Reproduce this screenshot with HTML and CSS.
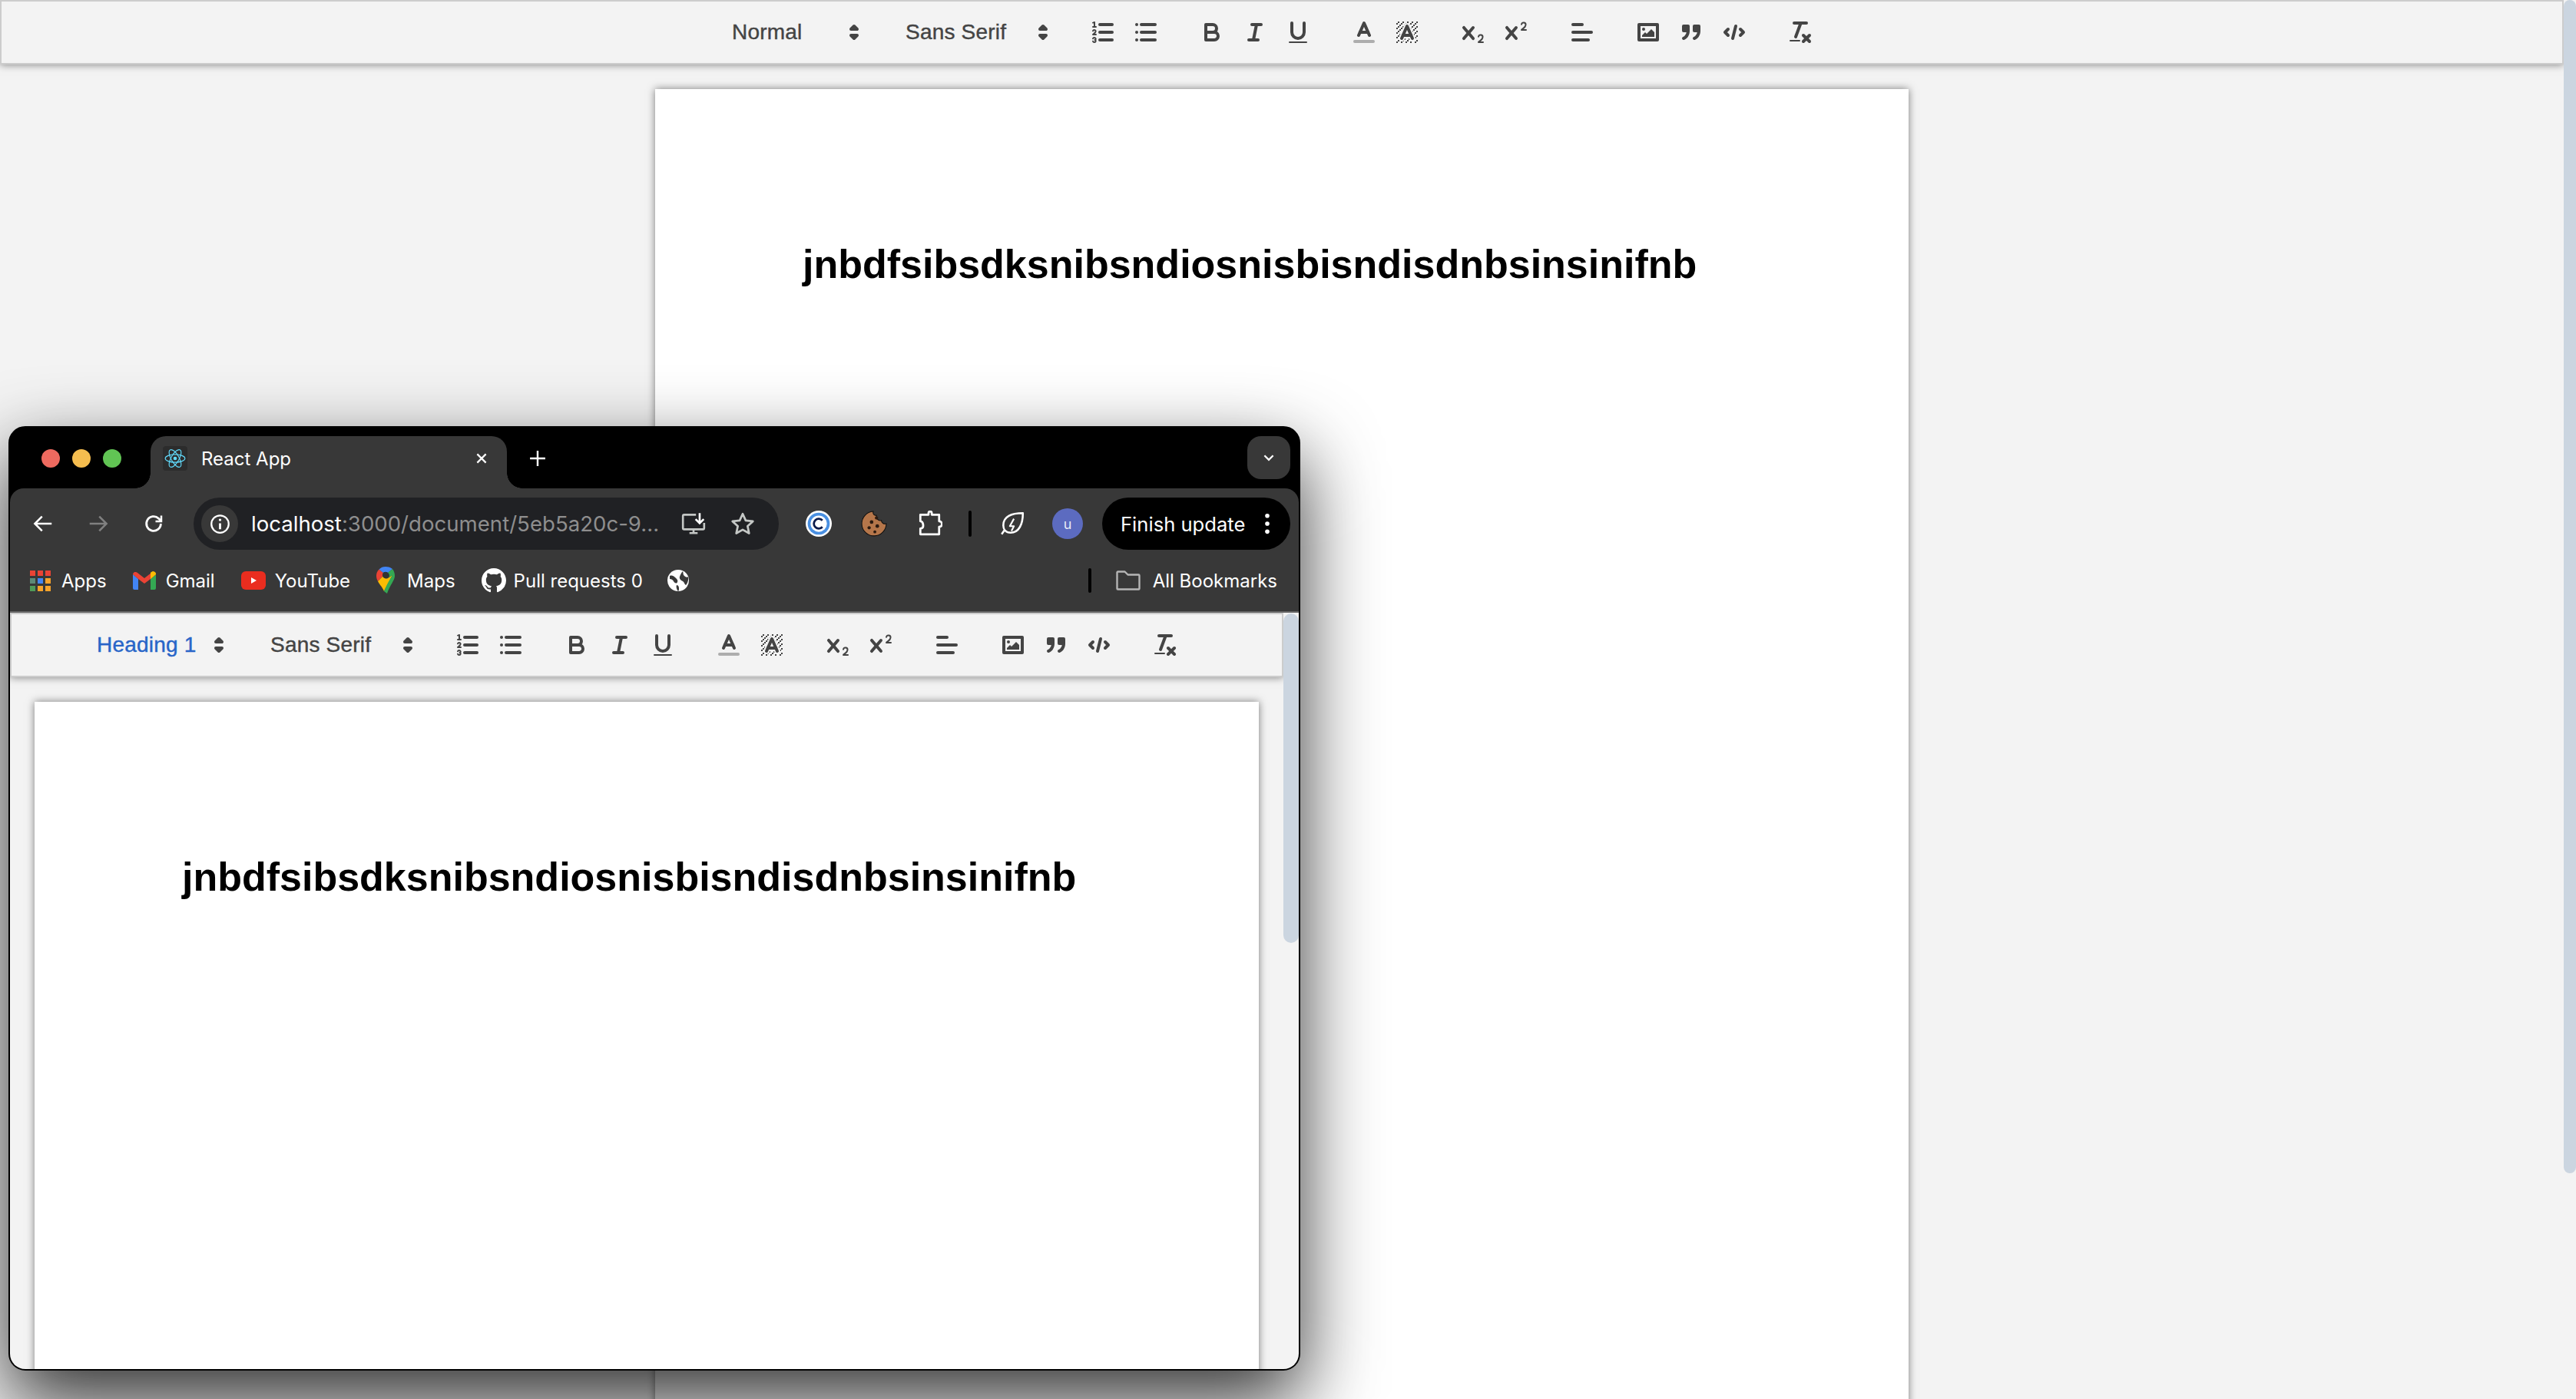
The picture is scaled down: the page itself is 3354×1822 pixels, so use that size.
FILE: index.html
```html
<!DOCTYPE html>
<html lang="en">
<head>
<meta charset="utf-8">
<title>React App</title>
<link rel="stylesheet" href="styles.css">
</head>
<body>
<svg class="defs" aria-hidden="true">
  <symbol id="q-arrow" viewBox="0 0 18 18"><polygon class="s" points="7 11 9 13 11 11 7 11"/><polygon class="s" points="7 7 9 5 11 7 7 7"/></symbol>
  <symbol id="q-ol" viewBox="0 0 18 18"><line class="s" x1="7" x2="15" y1="4" y2="4"/><line class="s" x1="7" x2="15" y1="9" y2="9"/><line class="s" x1="7" x2="15" y1="14" y2="14"/><line class="s thin" x1="2.5" x2="4.5" y1="5.5" y2="5.5"/><path class="f" d="M3.5,6A0.5,0.5,0,0,1,3,5.5V3.085l-0.276.138A0.5,0.5,0,0,1,2.053,3c-0.124-.247-0.023-0.324.224-0.447l1-.5A0.5,0.5,0,0,1,4,2.5v3A0.5,0.5,0,0,1,3.5,6Z"/><path class="s thin" d="M4.5,10.5h-2c0-.234,1.85-1.076,1.85-2.234A0.959,0.959,0,0,0,2.5,8.156"/><path class="s thin" d="M2.5,14.846a0.959,0.959,0,0,0,1.85-.109A0.7,0.7,0,0,0,3.75,14a0.688,0.688,0,0,0,.6-0.736,0.959,0.959,0,0,0-1.85-.109"/></symbol>
  <symbol id="q-ul" viewBox="0 0 18 18"><line class="s" x1="6" x2="15" y1="4" y2="4"/><line class="s" x1="6" x2="15" y1="9" y2="9"/><line class="s" x1="6" x2="15" y1="14" y2="14"/><line class="s" x1="3" x2="3" y1="4" y2="4"/><line class="s" x1="3" x2="3" y1="9" y2="9"/><line class="s" x1="3" x2="3" y1="14" y2="14"/></symbol>
  <symbol id="q-b" viewBox="0 0 18 18"><path class="s" d="M5,4H9.5A2.5,2.5,0,0,1,12,6.5v0A2.5,2.5,0,0,1,9.5,9H5A0,0,0,0,1,5,9V4A0,0,0,0,1,5,4Z"/><path class="s" d="M5,9h5.5A2.5,2.5,0,0,1,13,11.5v0A2.5,2.5,0,0,1,10.5,14H5a0,0,0,0,1,0,0V9A0,0,0,0,1,5,9Z"/></symbol>
  <symbol id="q-i" viewBox="0 0 18 18"><line class="s" x1="7" x2="13" y1="4" y2="4"/><line class="s" x1="5" x2="11" y1="14" y2="14"/><line class="s" x1="8" x2="10" y1="14" y2="4"/></symbol>
  <symbol id="q-u" viewBox="0 0 18 18"><path class="s" d="M5,3V9a4.012,4.012,0,0,0,4,4H9a4.012,4.012,0,0,0,4-4V3"/><rect class="f" height="1" rx="0.5" ry="0.5" width="12" x="3" y="15"/></symbol>
  <symbol id="q-color" viewBox="0 0 18 18"><line class="s faint" x1="3" x2="15" y1="15" y2="15"/><polyline class="s" points="5.5 11 9 3 12.5 11"/><line class="s" x1="11.63" x2="6.38" y1="9" y2="9"/></symbol>
  <symbol id="q-bg" viewBox="0 0 18 18"><g class="f"><polygon points="6 6.868 6 6 5 6 5 7 5.942 7 6 6.868"/><rect height="1" width="1" x="4" y="4"/><polygon points="6.817 5 6 5 6 6 6.38 6 6.817 5"/><rect height="1" width="1" x="2" y="6"/><rect height="1" width="1" x="3" y="5"/><rect height="1" width="1" x="4" y="7"/><polygon points="4 11.439 4 11 3 11 3 12 3.755 12 4 11.439"/><rect height="1" width="1" x="2" y="12"/><rect height="1" width="1" x="2" y="9"/><rect height="1" width="1" x="2" y="15"/><polygon points="4.63 10 4 10 4 11 4.192 11 4.63 10"/><rect height="1" width="1" x="3" y="8"/><path d="M10.832,4.2L11,4.582V4H10.708A1.948,1.948,0,0,1,10.832,4.2Z"/><path d="M7,4.582L7.168,4.2A1.929,1.929,0,0,1,7.292,4H7V4.582Z"/><path d="M8,13H7.683l-0.351.8a1.933,1.933,0,0,1-.124.2H8V13Z"/><rect height="1" width="1" x="12" y="2"/><rect height="1" width="1" x="11" y="3"/><path d="M9,3H8V3.282A1.985,1.985,0,0,1,9,3Z"/><rect height="1" width="1" x="2" y="3"/><rect height="1" width="1" x="6" y="2"/><rect height="1" width="1" x="3" y="2"/><rect height="1" width="1" x="5" y="3"/><rect height="1" width="1" x="9" y="2"/><rect height="1" width="1" x="15" y="14"/><polygon points="13.447 10.174 13.469 10.225 13.472 10.232 13.808 11 14 11 14 10 13.37 10 13.447 10.174"/><rect height="1" width="1" x="13" y="7"/><rect height="1" width="1" x="15" y="5"/><rect height="1" width="1" x="14" y="6"/><rect height="1" width="1" x="15" y="8"/><rect height="1" width="1" x="14" y="9"/><path d="M3.775,14H3v1H4V14.314A1.97,1.97,0,0,1,3.775,14Z"/><rect height="1" width="1" x="14" y="3"/><polygon points="12 6.868 12 6 11.62 6 12 6.868"/><rect height="1" width="1" x="15" y="2"/><rect height="1" width="1" x="12" y="5"/><rect height="1" width="1" x="13" y="4"/><polygon points="12.933 9 13 9 13 8 12.495 8 12.933 9"/><rect height="1" width="1" x="9" y="14"/><rect height="1" width="1" x="8" y="15"/><path d="M6,14.926V15H7V14.316A1.993,1.993,0,0,1,6,14.926Z"/><rect height="1" width="1" x="5" y="15"/><path d="M10.668,13.8L10.317,13H10v1h0.792A1.947,1.947,0,0,1,10.668,13.8Z"/><rect height="1" width="1" x="11" y="15"/><path d="M14.332,12.2a1.99,1.99,0,0,1,.166.8H15V12H14.245Z"/><rect height="1" width="1" x="14" y="15"/><rect height="1" width="1" x="15" y="11"/></g><polyline class="s" points="5.5 13 9 5 12.5 13"/><line class="s" x1="11.63" x2="6.38" y1="11" y2="11"/></symbol>
  <symbol id="q-sub" viewBox="0 0 18 18"><path class="f" d="M15.5,15H13.861a3.858,3.858,0,0,0,1.914-2.975,1.8,1.8,0,0,0-1.6-1.751A1.921,1.921,0,0,0,12.021,11.7a0.50013,0.50013,0,1,0,.957.291h0a0.914,0.914,0,0,1,1.053-.725,0.81,0.81,0,0,1,.744.762c0,1.076-1.16971,1.86982-1.93971,2.43082A1.45639,1.45639,0,0,0,12,15.5a0.5,0.5,0,0,0,.5.5h3A0.5,0.5,0,0,0,15.5,15Z"/><path class="f" d="M9.65,5.241a1,1,0,0,0-1.409.108L6,7.964,3.759,5.349A1,1,0,0,0,2.192,6.59178Q2.21541,6.6213,2.241,6.649L4.684,9.5,2.241,12.35A1,1,0,0,0,3.71,13.70722q0.02557-.02768.049-0.05722L6,11.036,8.241,13.65a1,1,0,1,0,1.567-1.24277Q9.78459,12.3777,9.759,12.35L7.316,9.5,9.759,6.651A1,1,0,0,0,9.65,5.241Z"/></symbol>
  <symbol id="q-sup" viewBox="0 0 18 18"><path class="f" d="M15.5,7H13.861a4.015,4.015,0,0,0,1.914-2.975,1.8,1.8,0,0,0-1.6-1.751A1.922,1.922,0,0,0,12.021,3.7a0.5,0.5,0,1,0,.957.291,0.917,0.917,0,0,1,1.053-.725,0.81,0.81,0,0,1,.744.762c0,1.077-1.164,1.925-1.934,2.486A1.423,1.423,0,0,0,12,7.5a0.5,0.5,0,0,0,.5.5h3A0.5,0.5,0,0,0,15.5,7Z"/><path class="f" d="M9.651,5.241a1,1,0,0,0-1.41.108L6,7.964,3.759,5.349a1,1,0,1,0-1.519,1.3L4.683,9.5,2.241,12.35a1,1,0,1,0,1.519,1.3L6,11.036,8.241,13.65a1,1,0,0,0,1.519-1.3L7.317,9.5,9.759,6.651A1,1,0,0,0,9.651,5.241Z"/></symbol>
  <symbol id="q-align" viewBox="0 0 18 18"><line class="s" x1="3" x2="15" y1="9" y2="9"/><line class="s" x1="3" x2="13" y1="14" y2="14"/><line class="s" x1="3" x2="9" y1="4" y2="4"/></symbol>
  <symbol id="q-image" viewBox="0 0 18 18"><rect class="s" height="10" width="12" x="3" y="4"/><circle class="f" cx="6" cy="7" r="1"/><polyline class="f" points="5 12 5 11 7 9 8 10 11 7 13 9 13 12 5 12"/></symbol>
  <symbol id="q-quote" viewBox="0 0 18 18"><rect class="f s" height="3" width="3" x="4" y="5"/><rect class="f s" height="3" width="3" x="11" y="5"/><path class="f s" d="M7,8c0,4.031-3,5-3,5"/><path class="f s" d="M14,8c0,4.031-3,5-3,5"/></symbol>
  <symbol id="q-code" viewBox="0 0 18 18"><polyline class="s" points="5 7 3 9 5 11"/><polyline class="s" points="13 7 15 9 13 11"/><line class="s" x1="10" x2="8" y1="5" y2="13"/></symbol>
  <symbol id="q-clean" viewBox="0 0 18 18"><line class="s" x1="5" x2="13" y1="3" y2="3"/><line class="s" x1="6" x2="9.35" y1="12" y2="3"/><line class="s" x1="11" x2="15" y1="11" y2="15"/><line class="s" x1="15" x2="11" y1="11" y2="15"/><rect class="f" height="1" rx="0.5" ry="0.5" width="7" x="2" y="14"/></symbol>
</svg>

<div class="app app-page">
  <main class="app-main">
    <div class="toolbar">
      <div class="picker picker-header"><span>Normal</span><svg><use href="#q-arrow"/></svg></div>
      <div class="picker picker-font"><span>Sans Serif</span><svg><use href="#q-arrow"/></svg></div>
      <div class="group"><span class="btn"><svg><use href="#q-ol"/></svg></span><span class="btn"><svg><use href="#q-ul"/></svg></span></div>
      <div class="group"><span class="btn"><svg><use href="#q-b"/></svg></span><span class="btn"><svg><use href="#q-i"/></svg></span><span class="btn"><svg><use href="#q-u"/></svg></span></div>
      <div class="group"><span class="btn"><svg><use href="#q-color"/></svg></span><span class="btn"><svg><use href="#q-bg"/></svg></span></div>
      <div class="group"><span class="btn"><svg><use href="#q-sub"/></svg></span><span class="btn"><svg><use href="#q-sup"/></svg></span></div>
      <div class="group"><span class="btn"><svg><use href="#q-align"/></svg></span></div>
      <div class="group"><span class="btn"><svg><use href="#q-image"/></svg></span><span class="btn"><svg><use href="#q-quote"/></svg></span><span class="btn"><svg><use href="#q-code"/></svg></span></div>
      <div class="group"><span class="btn"><svg><use href="#q-clean"/></svg></span></div>
    </div>
    <div class="doc"><article class="paper"><h1>jnbdfsibsdksnibsndiosnisbisndisdnbsinsinifnb</h1></article></div>
  </main>
  <div class="track track-page"><div class="thumb thumb-page"></div></div>
</div>

<section class="window">
  <header class="tabstrip">
    <div class="lights"><i class="light red"></i><i class="light yellow"></i><i class="light green"></i></div>
    <div class="tab">
      <span class="favicon"><svg viewBox="-12 -12 24 24" fill="none" stroke="#61dafb" stroke-width="1"><circle r="2" fill="#61dafb" stroke="none"/><ellipse rx="11" ry="4.4"/><ellipse rx="11" ry="4.4" transform="rotate(60)"/><ellipse rx="11" ry="4.4" transform="rotate(120)"/></svg></span>
      <span class="tab-title">React App</span>
      <svg class="tab-close" viewBox="0 0 16 16" fill="none" stroke="#fff" stroke-width="2"><path d="M3 3l10 10M13 3L3 13"/></svg>
    </div>
    <svg class="tab-new" viewBox="0 0 20 20" fill="none" stroke="#fff" stroke-width="2.2"><path d="M10 1v18M1 10h18"/></svg>
    <span class="expand"><svg viewBox="0 0 16 16" fill="none" stroke="#fff" stroke-width="2"><path d="M3 5.5l5 5 5-5"/></svg></span>
  </header>

  <nav class="navbar">
    <span class="nav-btn"><svg viewBox="0 0 24 24" fill="none" stroke="#fff" stroke-width="2"><path d="M21 12H3.5M11 4.5L3.5 12l7.5 7.5"/></svg></span>
    <span class="nav-btn"><svg viewBox="0 0 24 24" fill="none" stroke="#808080" stroke-width="2"><path d="M3 12h17.5M13 4.5l7.500 7.500-7.500 7.500"/></svg></span>
    <span class="nav-btn"><svg viewBox="0 0 24 24" fill="none" stroke="#fff" stroke-width="2.200"><path d="M19.500 12a7.500 7.500 0 1 1-2.300-5.400L20 9.200"/><path d="M20 3.500v6h-6" stroke-width="2"/></svg></span>
    <div class="omnibox">
      <span class="site-info"><svg viewBox="0 0 24 24" fill="none" stroke="#fff" stroke-width="2"><circle cx="12" cy="12" r="10"/><path d="M12 11v7" stroke-width="2.500"/><circle cx="12" cy="7.200" r="1.500" fill="#fff" stroke="none"/></svg></span>
      <span class="url"><b>localhost</b>:3000/document/5eb5a20c-9...</span>
      <svg class="omni-icon" viewBox="0 0 32 32" fill="none" stroke="#c4c7c5" stroke-width="2.500"><path d="M19 5H4.500a1.500 1.500 0 0 0-1.500 1.500v15a1.500 1.500 0 0 0 1.500 1.500h23a1.500 1.500 0 0 0 1.500-1.500V15"/><path d="M11 27.500h10M16 23v4.500"/><path d="M23.500 3v12M18.500 10.500l5 5 5-5" stroke="#fff"/></svg>
      <svg class="omni-icon" viewBox="0 0 32 32" fill="none" stroke="#c4c7c5" stroke-width="2.600"><path d="M16 4l3.700 8.100 8.800 1-6.500 6 1.800 8.700L16 23.400 8.200 27.800 10 19.100l-6.500-6 8.800-1z" stroke-linejoin="round"/></svg>
    </div>
    <span class="nav-btn ext-first"><svg class="ext" viewBox="0 0 32 32"><circle cx="16" cy="16" r="16" fill="#fff"/><circle cx="16" cy="16" r="13.500" fill="#4a90e2"/><circle cx="16" cy="16" r="10" fill="#fff"/><path d="M20.500 12a6 6 0 1 0 0 8" fill="none" stroke="#0b1a4a" stroke-width="2.600"/></svg></span>
    <span class="nav-btn"><svg class="ext" viewBox="0 0 32 32"><path d="M15 1a15 15 0 1 0 16 15c-3 1-6-1-6-4-4 1-7-3-6-6-3 0-5-2-4-5z" fill="#b5764a" stroke="#111" stroke-width="1"/><circle cx="19" cy="9" r="2" fill="#2b1a10"/><circle cx="13" cy="14" r="2.200" fill="#2b1a10"/><circle cx="20" cy="19" r="2.200" fill="#2b1a10"/><circle cx="10" cy="21" r="2" fill="#2b1a10"/><circle cx="17" cy="26" r="1.800" fill="#2b1a10"/></svg></span>
    <span class="nav-btn"><svg class="ext" viewBox="0 0 32 32" fill="none" stroke="#fff" stroke-width="2.600" stroke-linejoin="round"><path d="M12 5h3V3a2 2 0 0 1 4 0v2h9v8a3.500 3.500 0 0 1 0 7v9H5v-7c3 0 3.500-2 3.500-3.500S8 13 5 13V5z"/></svg></span>
    <i class="tool-sep"></i>
    <span class="nav-btn"><svg class="ext" viewBox="0 0 32 32" fill="none" stroke="#fff" stroke-width="2.400" stroke-linejoin="round"><path d="M29 3C15 3 5 7 5 18c0 5 3 9 9 9 10 0 15-10 15-24z"/><path d="M18 10l-5 9h5l-3 6" stroke-width="2"/><path d="M7 23l-4 6"/></svg></span>
    <span class="nav-btn"><span class="avatar">u</span></span>
    <div class="finish"><span>Finish update</span><svg viewBox="0 0 8 32" fill="#fff"><circle cx="4" cy="5" r="3"/><circle cx="4" cy="16" r="3"/><circle cx="4" cy="27" r="3"/></svg></div>
  </nav>

  <div class="bookmarks">
    <div class="mark"><span class="apps-grid"><i class="c-red"></i><i class="c-red"></i><i class="c-red"></i><i class="c-teal"></i><i class="c-blue"></i><i class="c-amber"></i><i class="c-green"></i><i class="c-amber"></i><i class="c-amber"></i></span>Apps</div>
    <div class="mark"><svg class="mark-gmail" viewBox="0 0 30 24"><path d="M0 4v18a2 2 0 0 0 2 2h5V10z" fill="#4285f4"/><path d="M30 4v18a2 2 0 0 1-2 2h-5V10z" fill="#34a853"/><path d="M0 4a3.500 3.500 0 0 1 6-2l9 7 9-7a3.500 3.500 0 0 1 6 2l-7 6-8 6-8-6z" fill="#ea4335"/><path d="M23 10V1.500l1-.300a3.500 3.500 0 0 1 6 2.800z" fill="#fbbc04"/></svg>Gmail</div>
    <div class="mark"><svg class="mark-yt" viewBox="0 0 32 24"><rect width="32" height="24" rx="6" fill="#ea2d1f"/><path d="M13 8l7 4-7 4z" fill="#fff"/></svg>YouTube</div>
    <div class="mark"><svg class="mark-maps" viewBox="0 0 24 36"><path d="M3.500 3.500C1 6 0 9 0 12c0 3 1 5 2 7l7-7a4 4 0 0 1 0-4z" fill="#ea4335"/><path d="M12 0c-3.500 0-6 1-8.500 3.500L9 8a4 4 0 0 1 6 0l6-5C18.500 1 15.500 0 12 0z" fill="#4285f4"/><path d="M2 19c2 4 6 8 8 13L21 11l-6 4a4 4 0 0 1-6-3z" fill="#fbbc04"/><path d="M21 3c2 2.500 3 5.500 3 9 0 6-7 13-10 23l-4-3c2-5 6-13 11-21l-6 4a4 4 0 0 0 0-7z" fill="#34a853"/><circle cx="12" cy="11" r="4" fill="#333"/></svg>Maps</div>
    <div class="mark"><svg class="mark-gh" viewBox="0 0 16 16" fill="#fff"><path d="M8 0C3.580 0 0 3.580 0 8c0 3.540 2.290 6.530 5.470 7.590.4.07.55-.17.55-.38 0-.19-.01-.82-.01-1.490-2.010.37-2.530-.49-2.690-.94-.09-.23-.48-.94-.82-1.130-.28-.15-.68-.52-.01-.53.63-.01 1.080.58 1.230.82.72 1.210 1.870.87 2.330.66.07-.52.28-.87.51-1.070-1.780-.2-3.640-.89-3.640-3.950 0-.87.31-1.590.82-2.150-.08-.2-.36-1.020.08-2.120 0 0 .67-.21 2.200.82.64-.18 1.320-.27 2-.27.68 0 1.360.09 2 .27 1.530-1.040 2.200-.82 2.200-.82.44 1.100.16 1.920.08 2.120.51.56.82 1.270.82 2.150 0 3.070-1.870 3.750-3.650 3.950.29.25.54.73.54 1.480 0 1.070-.01 1.930-.01 2.200 0 .21.15.46.55.38A8.013 8.013 0 0016 8c0-4.420-3.580-8-8-8z"/></svg>Pull requests 0</div>
    <svg class="mark-globe" viewBox="0 0 28 28"><circle cx="14" cy="14" r="14" fill="#fff"/><path d="M3 8c3-1 5 0 7 2s4 3 3 6-4 1-5-1-3-3-5-3zM20 2c1 3 0 4 2 6s4 2 5 1c1 4-1 9-3 11-2-1-2-4-4-5s-5-3-4-6 2-5 4-7zM12 20c2 0 3 2 3 4s0 3-1 4c-2-2-3-6-2-8z" fill="#383838"/></svg>
    <i class="marks-sep"></i>
    <div class="mark mark-all"><svg class="mark-folder" viewBox="0 0 32 26" fill="none" stroke="#b5b5b5" stroke-width="2.400" stroke-linejoin="round"><path d="M1.500 2.500a1 1 0 0 1 1-1h9l4 4h14a1 1 0 0 1 1 1v17a1 1 0 0 1-1 1h-27a1 1 0 0 1-1-1z"/></svg>All Bookmarks</div>
  </div>

  <div class="app app-window">
    <main class="app-main">
      <div class="toolbar">
        <div class="picker picker-header active"><span>Heading 1</span><svg><use href="#q-arrow"/></svg></div>
        <div class="picker picker-font"><span>Sans Serif</span><svg><use href="#q-arrow"/></svg></div>
        <div class="group"><span class="btn"><svg><use href="#q-ol"/></svg></span><span class="btn"><svg><use href="#q-ul"/></svg></span></div>
        <div class="group"><span class="btn"><svg><use href="#q-b"/></svg></span><span class="btn"><svg><use href="#q-i"/></svg></span><span class="btn"><svg><use href="#q-u"/></svg></span></div>
        <div class="group"><span class="btn"><svg><use href="#q-color"/></svg></span><span class="btn"><svg><use href="#q-bg"/></svg></span></div>
        <div class="group"><span class="btn"><svg><use href="#q-sub"/></svg></span><span class="btn"><svg><use href="#q-sup"/></svg></span></div>
        <div class="group"><span class="btn"><svg><use href="#q-align"/></svg></span></div>
        <div class="group"><span class="btn"><svg><use href="#q-image"/></svg></span><span class="btn"><svg><use href="#q-quote"/></svg></span><span class="btn"><svg><use href="#q-code"/></svg></span></div>
        <div class="group"><span class="btn"><svg><use href="#q-clean"/></svg></span></div>
      </div>
      <div class="doc"><article class="paper"><h1>jnbdfsibsdksnibsndiosnisbisndisdnbsinsinifnb</h1></article></div>
    </main>
    <div class="track track-window"><div class="thumb thumb-window"></div></div>
  </div>
</section>
</body>
</html>
```
FILE: styles.css
```css
*, *::before, *::after { box-sizing: border-box; }
html, body { margin: 0; height: 100%; }
body {
  background: #f3f3f3;
  overflow: hidden;
  font-family: "Liberation Sans", sans-serif;
  color: #444;
}
.defs { position: absolute; width: 0; height: 0; }

/* editor shell */
.app { display: flex; background: #f3f3f3; font-family: "Liberation Sans", sans-serif; }
.app-page { height: 100vh; }
.app-window { flex: 1; min-height: 0; }
.app-main { flex: 1; min-width: 0; overflow: hidden; }
.track { flex: none; }
.track-page { width: 16px; }
.track-window { width: 20px; padding-top: 1px; }
.thumb { background: #cbd5e0; }
.thumb-page { height: 1528px; border-radius: 8px; }
.thumb-window { height: 429px; border-radius: 10px; }

/* toolbar */
.toolbar {
  position: relative;
  z-index: 1;
  display: flex;
  justify-content: center;
  height: 84px;
  padding: 16px;
  background: #f3f3f3;
  border: 2px solid #ccc;
  box-shadow: 0 0 10px rgba(0, 0, 0, .5);
}
.picker {
  display: flex;
  flex: none;
  align-items: center;
  justify-content: space-between;
  height: 48px;
  margin-right: 30px;
  padding-left: 17px;
  padding-right: 2px;
  font-size: 28px;
  letter-spacing: .2px;
  -webkit-text-stroke: .4px currentColor;
  color: #444;
}
.picker svg { width: 36px; height: 36px; }
.picker-header { width: 196px; }
.picker-font { width: 216px; }
.group { display: flex; flex: none; margin-right: 30px; }
.btn { display: block; width: 56px; height: 48px; padding: 6px 10px; }
.btn svg { display: block; width: 36px; height: 36px; }
.s { fill: none; stroke: #444; stroke-width: 2; stroke-linecap: round; stroke-linejoin: round; }
.f { fill: #444; }
.f.s { fill: #444; }
.thin { stroke-width: 1; }
.faint { opacity: .4; }
.active { color: #2865c8; }
.active .s { stroke: #2865c8; }

/* document */
.doc { display: flex; justify-content: center; padding: 32px; }
.paper {
  flex: 0 1 1632px;
  min-height: 2112px;
  padding: 192px;
  background: #fff;
  box-shadow: 0 0 10px rgba(0, 0, 0, .5);
}
.paper h1 {
  margin: 0;
  font-size: 52px;
  line-height: 1.42;
  font-weight: 700;
  color: #000;
  white-space: nowrap;
}

/* browser window */
.window {
  position: absolute;
  left: 11px;
  top: 555px;
  width: 1682px;
  height: 1230px;
  display: flex;
  flex-direction: column;
  overflow: hidden;
  border: 2px solid #000;
  border-radius: 22px;
  background: #000;
  box-shadow: 0 40px 100px rgba(0, 0, 0, .8);
  font-family: Inter, sans-serif;
  color: #fff;
}

.tabstrip { display: flex; flex: none; align-items: flex-end; height: 79px; background: #000; }
.lights { display: flex; gap: 16px; align-self: center; margin-left: 41px; margin-right: 38px; margin-top: 1px; }
.light { display: block; width: 24px; height: 24px; border-radius: 50%; }
.red { background: #ee6a5f; }
.yellow { background: #f5bd4f; }
.green { background: #61c454; }
.tab {
  position: relative;
  display: flex;
  align-items: center;
  width: 464px;
  height: 68px;
  padding: 0 24px 10px 16px;
  background: #383838;
  border-radius: 20px 20px 0 0;
}
.tab::before, .tab::after {
  content: "";
  position: absolute;
  bottom: 0;
  width: 20px;
  height: 20px;
}
.tab::before { left: -20px; background: radial-gradient(circle at 0 0, #000 19.500px, #383838 20px); }
.tab::after { right: -20px; background: radial-gradient(circle at 100% 0, #000 19.500px, #383838 20px); }
.favicon { display: flex; width: 32px; height: 32px; padding: 2px; border-radius: 4px; background: #2c2c2c; flex: none; }
.favicon svg { width: 28px; height: 28px; }
.tab-title { margin-left: 18px; flex: 1; font-size: 24px; white-space: nowrap; }
.tab-close { width: 18px; height: 18px; flex: none; }
.tab-new { width: 22px; height: 22px; margin-left: 29px; align-self: center; margin-top: 1px; flex: none; }
.expand {
  display: flex;
  align-items: center;
  justify-content: center;
  width: 56px;
  height: 56px;
  margin-left: auto;
  margin-right: 11px;
  align-self: flex-start;
  margin-top: 11px;
  border-radius: 18px;
  background: #383838;
}
.expand svg { width: 18px; height: 18px; }

.navbar {
  display: flex;
  flex: none;
  align-items: center;
  height: 92px;
  padding: 12px 0 12px 7px;
  background: #383838;
  border-radius: 18px 18px 0 0;
}
.nav-btn { display: flex; flex: none; width: 72px; align-items: center; justify-content: center; }
.nav-btn > svg { width: 30px; height: 30px; }
.nav-btn > svg.ext { width: 34px; height: 34px; }
.ext-first { margin-left: 16px; }
.omnibox {
  display: flex;
  flex: none;
  align-items: center;
  width: 762px;
  height: 68px;
  margin-left: 16px;
  padding-left: 10px;
  border-radius: 34px;
  background: #202124;
}
.site-info {
  display: flex;
  flex: none;
  align-items: center;
  justify-content: center;
  width: 48px;
  height: 48px;
  border-radius: 50%;
  background: #383838;
}
.site-info svg { width: 27px; height: 27px; }
.url { flex: 1; margin-left: 17px; font-size: 27.6px; color: #8e8e8e; white-space: nowrap; }
.url b { font-weight: 400; color: #fff; }
.omni-icon { flex: none; width: 34px; height: 34px; margin-right: 30px; }
.tool-sep { display: block; flex: none; width: 4px; height: 34px; margin: 0 17px 0 15px; border-radius: 2px; background: #000; }
.avatar {
  display: flex;
  align-items: center;
  justify-content: center;
  width: 40px;
  height: 40px;
  border-radius: 50%;
  background: #5c6bc0;
  font-size: 18px;
  color: #e8eaf6;
}
.finish {
  display: flex;
  flex: none;
  align-items: center;
  justify-content: space-between;
  width: 245px;
  height: 68px;
  margin-left: 9px;
  padding: 0 26px 0 24px;
  border-radius: 34px;
  background: #000;
  font-size: 25.6px;
  white-space: nowrap;
}
.finish svg { width: 8px; height: 30px; }

.bookmarks {
  display: flex;
  flex: none;
  align-items: center;
  height: 70px;
  padding: 0 28px 12px 26px;
  background: #383838;
  border-bottom: 2px solid #666;
  font-size: 24px;
}
.mark { display: flex; align-items: center; margin-right: 34px; white-space: nowrap; }
.apps-grid { display: grid; grid-template-columns: repeat(3, 7px); grid-auto-rows: 7px; gap: 3px; margin-right: 14px; }
.apps-grid i { display: block; }
.c-red { background: #ea4335; }
.c-teal { background: #5d8a78; }
.c-blue { background: #4285f4; }
.c-amber { background: #f6a32b; }
.c-green { background: #4f9a58; }
.mark-gmail { width: 30px; height: 24px; margin-right: 13px; }
.mark-yt { width: 32px; height: 24px; margin-right: 12px; }
.mark-maps { width: 24px; height: 36px; margin-right: 16px; }
.mark-gh { width: 32px; height: 32px; margin-right: 10px; }
.mark-globe { width: 28px; height: 28px; flex: none; margin-left: -2px; }
.marks-sep { display: block; flex: none; width: 4px; height: 32px; margin-left: auto; margin-right: 32px; border-radius: 2px; background: #000; }
.mark-all { margin-right: 0; }
.mark-folder { width: 32px; height: 26px; margin-right: 16px; }
```
